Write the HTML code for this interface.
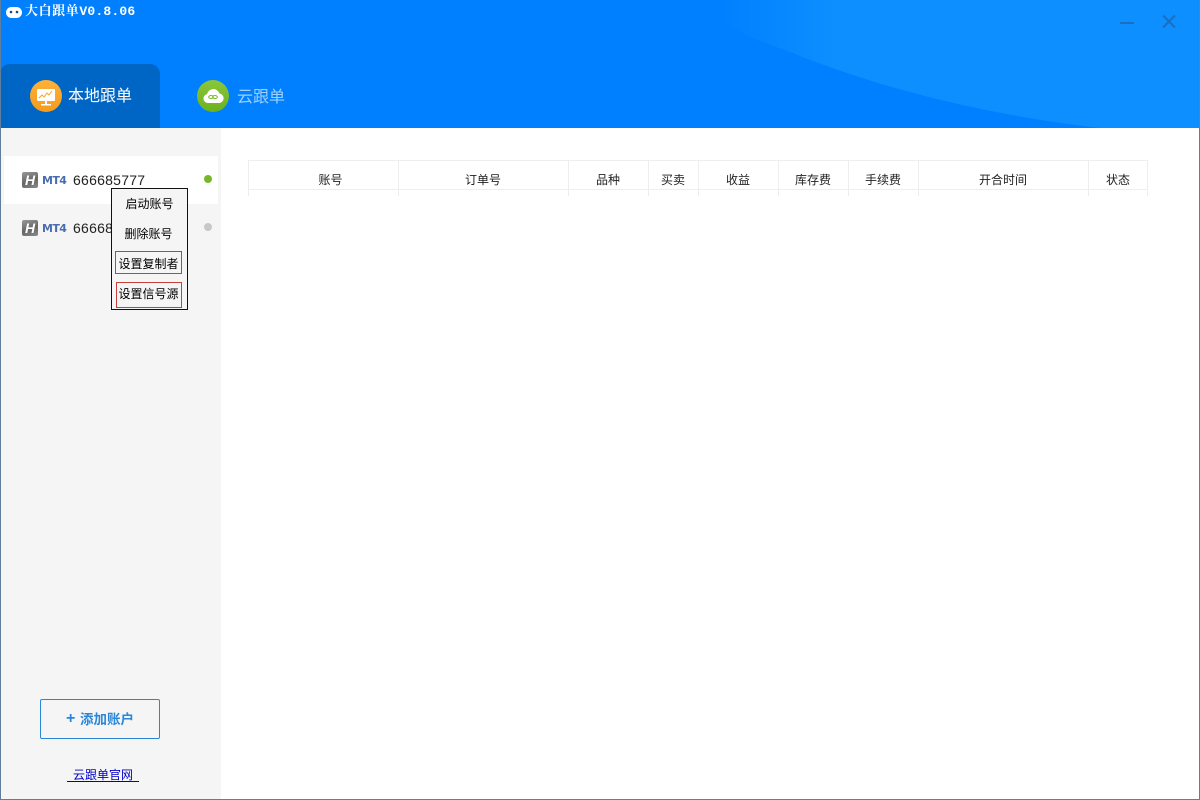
<!DOCTYPE html>
<html><head><meta charset="utf-8"><style>
*{box-sizing:border-box;margin:0;padding:0}
html,body{width:1200px;height:800px;overflow:hidden;background:#fff;font-family:"Liberation Sans","Noto Sans CJK SC",sans-serif}
.a{position:absolute;white-space:nowrap}
#hd{left:0;top:0;width:1200px;height:128px;background:#0080ff}
#side{left:0;top:128px;width:221px;height:672px;background:#f5f5f5}
.th{position:absolute;top:160px;height:36px;border-left:1px solid #eee;text-align:center;font-size:12px;line-height:40px;color:#222;padding-right:1px}
.cm{left:111px;width:75px;text-align:center;font-size:12px;color:#000;line-height:16px}
.red{position:absolute;border:1px solid #c8403c}
.h{width:16px;height:16px;border-radius:2px;background:linear-gradient(160deg,#999,#666 55%,#8c8c8c);color:#fff;font:italic bold 14px/16px "Liberation Sans",sans-serif;text-align:center}
.mt{font:bold 11px/16px "DejaVu Sans","Liberation Sans",sans-serif;color:#4a6db0;letter-spacing:-.6px}
.num{font-size:14px;line-height:16px;color:#222;letter-spacing:.25px}
</style></head><body>
<div class="a" id="hd"></div>
<svg class="a" style="left:0;top:0" width="1200" height="128"><defs><linearGradient id="g" x1="720" x2="835" y1="0" y2="0" gradientUnits="userSpaceOnUse"><stop offset="0" stop-color="#0080ff"/><stop offset="1" stop-color="#0d8fff"/></linearGradient></defs><path d="M700 0C730 30 750 38 790 52C880 88 980 114 1100 128H1200V0Z" fill="url(#g)"/>
<path d="M1120 23H1134" stroke="#1a6fc0" stroke-width="2"/><path d="M1163 15.500L1175 27.500M1175 15.500L1163 27.500" stroke="#1a6fc0" stroke-width="2"/></svg>
<svg class="a" style="left:6px;top:6px" width="16" height="13"><rect x="0" y="1" width="16" height="11" rx="5.500" fill="#fff"/><circle cx="5" cy="6" r="1.300" fill="#0a4a90"/><circle cx="11" cy="6" r="1.300" fill="#0a4a90"/></svg>
<div class="a" style="left:25px;top:3px;font:bold 13px/16px 'Liberation Serif','Noto Serif CJK SC',serif;color:#fff;letter-spacing:.6px">大白跟单<span style="font:bold 13px/16px 'Liberation Mono',monospace;letter-spacing:.2px">V0.8.06</span></div>
<div class="a" style="left:0;top:64px;width:160px;height:64px;background:#0066c6;border-radius:10px 10px 0 0"></div>
<svg class="a" style="left:30px;top:80px" width="32" height="32"><defs><linearGradient id="o" x1="0" y1="0" x2="0" y2="1"><stop offset="0" stop-color="#fdb23a"/><stop offset="1" stop-color="#f59a1c"/></linearGradient></defs><circle cx="16" cy="16" r="16" fill="url(#o)"/><rect x="7" y="9" width="18" height="12" rx="1" fill="#fff"/><path d="M15 21h2v3h-2zM11 24h10v1.500H11z" fill="#fff"/><path d="M9 18l3-3 2 2 3-4 2 2 3-4" fill="none" stroke="#f5a623" stroke-width="1"/></svg>
<div class="a" style="left:68px;top:86px;font-size:16px;line-height:20px;color:#fff;margin-top:1px">本地跟单</div>
<svg class="a" style="left:197px;top:80px" width="32" height="32"><defs><linearGradient id="v" x1="0" y1="0" x2="0" y2="1"><stop offset="0" stop-color="#8cc63a"/><stop offset="1" stop-color="#6cb21c"/></linearGradient></defs><circle cx="16" cy="16" r="16" fill="url(#v)"/><path d="M11 23a4.500 4.500 0 0 1-1-8.900a6.500 6.500 0 0 1 12.500-.6a4.800 4.800 0 0 1 0 9.500z" fill="#fff"/><ellipse cx="14" cy="17" rx="2.300" ry="1.500" fill="none" stroke="#7dbb2a" stroke-width="1.100"/><ellipse cx="18" cy="17" rx="2.300" ry="1.500" fill="none" stroke="#7dbb2a" stroke-width="1.100"/></svg>
<div class="a" style="left:237px;top:88px;font-size:16px;line-height:20px;color:#9fd0ff">云跟单</div>

<div class="a" id="side"></div>
<div class="a" style="left:4px;top:156px;width:214px;height:48px;background:#fff"></div>
<div class="a h" style="left:22px;top:172px">H</div><div class="a mt" style="left:42px;top:173px">MT4</div><div class="a num" style="left:73px;top:172px">666685777</div>
<div class="a" style="left:204px;top:175px;width:8px;height:8px;border-radius:50%;background:#76b82a"></div>
<div class="a h" style="left:22px;top:220px">H</div><div class="a mt" style="left:42px;top:221px">MT4</div><div class="a num" style="left:73px;top:220px">666685777</div>
<div class="a" style="left:204px;top:223px;width:8px;height:8px;border-radius:50%;background:#c8c8c8"></div>

<div class="a" style="left:111px;top:188px;width:77px;height:122px;background:#f5f5f5;border:1px solid #111"></div>
<div class="a cm" style="top:196px;left:112px">启动账号</div>
<div class="a cm" style="top:226px">删除账号</div>
<div class="a cm" style="top:256px">设置复制者</div>
<div class="a cm" style="top:286px">设置信号源</div>
<div class="red" style="left:115px;top:251px;width:67px;height:23px"></div>
<div class="red" style="left:116px;top:282px;width:66px;height:26px"></div>

<div class="a" style="left:66px;top:712px;width:9px;height:14px;color:#2a86d8;font:bold 16px/14px 'Liberation Sans',sans-serif;text-align:center">+</div>
<div class="a" style="left:40px;top:699px;width:120px;height:40px;border:1px solid #2a86d8;border-radius:2px"></div>
<div class="a" style="left:80px;top:711px;font-size:13.500px;font-weight:bold;line-height:18px;color:#2a86d8">添加账户</div>
<div class="a" style="left:67px;top:767px;width:72px;text-align:center;font-size:12px;line-height:16px;color:#0000c8;border-bottom:1px solid #0000c8;height:15px">云跟单官网</div>

<div class="a" style="left:248px;top:160px;width:900px;height:1px;background:#eee"></div>
<div class="a" style="left:248px;top:189px;width:900px;height:1px;background:#eee"></div>
<div class="th" style="left:248px;width:150px;padding-left:14px;padding-right:0">账号</div>
<div class="th" style="left:398px;width:170px">订单号</div>
<div class="th" style="left:568px;width:80px">品种</div>
<div class="th" style="left:648px;width:50px">买卖</div>
<div class="th" style="left:698px;width:80px">收益</div>
<div class="th" style="left:778px;width:70px">库存费</div>
<div class="th" style="left:848px;width:70px">手续费</div>
<div class="th" style="left:918px;width:170px">开合时间</div>
<div class="th" style="left:1088px;width:60px;border-right:1px solid #eee;padding-right:0">状态</div>

<div class="a" style="left:0;top:0;width:1px;height:800px;background:#5f7f9f"></div>
<div class="a" style="left:1199px;top:0;width:1px;height:800px;background:#5f7f9f"></div>
<div class="a" style="left:0;top:799px;width:1200px;height:1px;background:#5f7f9f"></div>
</body></html>
